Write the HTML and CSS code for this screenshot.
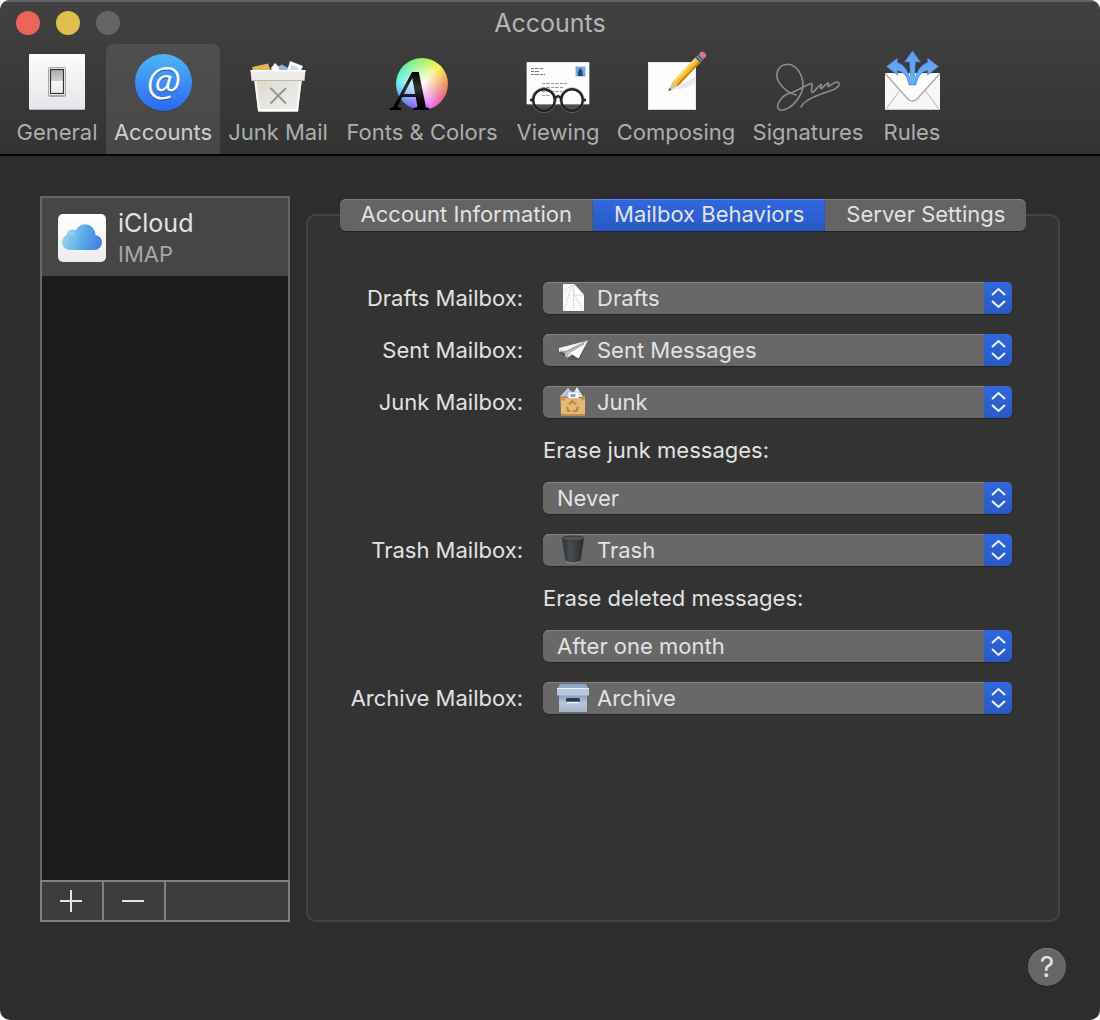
FILE: index.html
```html
<!DOCTYPE html>
<html lang="en">
<head>
    <meta charset="UTF-8">
    <meta name="viewport" content="width=device-width, initial-scale=1.0">
    <title>Accounts</title>
    <link rel="stylesheet" href="styles.css">
</head>
<body>
    <div class="window">
        <header class="titlebar">
            <div class="title-row">
                <div class="lights">
                    <button class="light close" aria-label="Close"></button>
                    <button class="light minimize" aria-label="Minimize"></button>
                    <button class="light zoom" aria-label="Zoom" disabled></button>
                </div>
                <h1>Accounts</h1>
            </div>
            <nav class="toolbar">
                <button class="tool">
                    <svg viewBox="0 0 72 64" aria-hidden="true">
                        <defs>
                            <linearGradient id="plate" x1="0" y1="0" x2="0" y2="1"><stop offset="0" stop-color="#fcfcfd"/><stop offset="1" stop-color="#e6e6ea"/></linearGradient>
                            <linearGradient id="rocker" x1="0" y1="0" x2="0" y2="1"><stop offset="0" stop-color="#aaa"/><stop offset=".48" stop-color="#d0d0d2"/><stop offset=".5" stop-color="#f6f6f6"/><stop offset="1" stop-color="#ececef"/></linearGradient>
                        </defs>
                        <rect x="8" y="4" width="56" height="56" rx="1" fill="#b5b5b9"/>
                        <rect x="8" y="4" width="56" height="55" rx="1" fill="url(#plate)"/>
                        <rect x="27" y="17" width="18" height="30" rx="2" fill="#aaa"/>
                        <rect x="28" y="18" width="16" height="27" rx="1" fill="#f4f4f4"/>
                        <rect x="29.500" y="19.500" width="13" height="24" fill="url(#rocker)" stroke="#333" stroke-width="1.200"/>
                    </svg>
                    <span>General</span>
                </button>
                <button class="tool active" aria-current="page">
                    <svg viewBox="0 0 72 64" aria-hidden="true">
                        <defs>
                            <linearGradient id="at" x1="0" y1="0" x2="0" y2="1"><stop offset="0" stop-color="#4fb5f5"/><stop offset="1" stop-color="#2b68f2"/></linearGradient>
                        </defs>
                        <circle cx="36.500" cy="33.300" r="28.500" fill="#222" opacity=".4"/>
                        <circle cx="36.500" cy="32.500" r="28.500" fill="url(#at)"/>
                        <text class="at-sign at-shadow" x="36.500" y="47">@</text>
                        <text class="at-sign" x="36.500" y="46">@</text>
                    </svg>
                    <span>Accounts</span>
                </button>
                <button class="tool">
                    <svg viewBox="0 0 72 64" aria-hidden="true">
                        <defs>
                            <linearGradient id="bin" x1="0" y1="0" x2="1" y2="1"><stop offset="0" stop-color="#dfd6bd"/><stop offset=".4" stop-color="#e3e3df"/><stop offset="1" stop-color="#f0f0f0"/></linearGradient>
                        </defs>
                        <path d="M10 17 L26 13.500 L29 21 L11 21Z" fill="#dcb55c"/>
                        <path d="M29 18 L33 13 L37 17 L38 21 L30 21Z" fill="#f7f7f7"/>
                        <path d="M37 16 L40 14.500 L46 18 L46 21 L37 21Z" fill="#8fb7dc"/>
                        <path d="M48 11 L61 16 L59 21 L45 21Z" fill="#f4f9fa"/>
                        <path d="M50 15 L56 18 L54 21 L48 21Z" fill="#c5dde2"/>
                        <path d="M12 28 H60 L56 61.500 H16Z" fill="url(#bin)"/>
                        <path d="M16 59 H56.500 L56 61.500 H16.500Z" fill="#fff"/>
                        <path d="M12 29 L16 60 L18 60 L14.500 29Z M60 29 L56 60 L54 60 L57.500 29Z" fill="#fff" opacity=".7"/>
                        <path d="M8.500 20 H63.500 L62.500 30.500 H9.500Z" fill="#ecebe7"/>
                        <path d="M8.500 20.800 H63.500" stroke="#fff" stroke-width="1.500"/>
                        <path d="M9.500 30.500 H62.500" stroke="#b9b9b4"/>
                        <path d="M28.500 38 L44 53.500 M44 38 L28.500 53.500" stroke="#98968a" stroke-width="2"/>
                    </svg>
                    <span>Junk Mail</span>
                </button>
                <button class="tool">
                    <svg viewBox="0 0 72 64" aria-hidden="true">
                        <defs>
                            <linearGradient id="ink" x1="0" y1="0" x2="0" y2="1"><stop offset=".2" stop-color="#000"/><stop offset=".45" stop-color="#333"/><stop offset=".7" stop-color="#000"/></linearGradient>
                        </defs>
                        <foreignObject x="10" y="8" width="52" height="52"><div class="color-wheel"></div></foreignObject>
                        <text class="font-letter" x="26" y="60">A</text>
                    </svg>
                    <span>Fonts &amp; Colors</span>
                </button>
                <button class="tool">
                    <svg viewBox="0 0 72 64" aria-hidden="true">
                        <rect x="4.500" y="12" width="63" height="42.500" rx="1" fill="#c8c8c8"/>
                        <rect x="5" y="12.500" width="62" height="41.500" rx=".5" fill="#fdfdfd"/>
                        <g fill="none" stroke="#777" stroke-width="1" stroke-dasharray="3 .8 4 1.200">
                            <path d="M9 18.500 H22 M9 21.500 H18 M9 24.500 H23"/>
                            <path d="M20 33.500 H45 M20 37.500 H42 M20 41.500 H40 M20 45.500 H29" stroke="#999"/>
                        </g>
                        <rect x="53.500" y="16.500" width="10" height="10" fill="#6fa9e8" stroke="#ccd7e4"/>
                        <path d="M56 26 V22 L58 18 L60 20 L61 26Z" fill="#26456f"/>
                        <g fill="none" stroke="#999" stroke-width="1" opacity=".5">
                            <circle cx="22" cy="50" r="12.500"/><circle cx="50" cy="50" r="12.500"/>
                        </g>
                        <g fill="#fff" fill-opacity=".12" stroke="#242424" stroke-width="2.400">
                            <circle cx="22" cy="50" r="10.800"/><circle cx="50" cy="50" r="10.800"/>
                            <path d="M32.800 48.500 Q36 44 39.200 48.500 M8 50 H12 M60 50 H64" fill="none"/>
                        </g>
                    </svg>
                    <span>Viewing</span>
                </button>
                <button class="tool">
                    <svg viewBox="0 0 72 64" aria-hidden="true">
                        <rect x="8" y="12" width="48" height="48" fill="#d5d5d5"/>
                        <rect x="8.500" y="12.500" width="47" height="46.500" fill="#fdfdfd"/>
                        <path d="M31 41 L55 27 L55 33 Q46 39 36 39Z" fill="#e8e8e8"/>
                        <g transform="translate(28.500 41) rotate(-46.500)">
                            <path d="M0 0 L10 -3.500 L10 3.500Z" fill="#e2c188"/>
                            <path d="M0 0 L3 -1.200 L3 1.200Z" fill="#333"/>
                            <rect x="10" y="-3.500" width="33" height="7" fill="#f2bd32"/>
                            <rect x="10" y="-3.500" width="33" height="2" fill="#fbdb72"/>
                            <rect x="10" y="1.500" width="33" height="2" fill="#c58a1c"/>
                            <rect x="42" y="-3.500" width="5.500" height="7" fill="#8fa5b3"/>
                            <path d="M43.500 -3.500 V3.500 M46 -3.500 V3.500" stroke="#26323a"/>
                            <rect x="47" y="-3.500" width="5.500" height="7" rx="2.500" fill="#d67493"/>
                        </g>
                    </svg>
                    <span>Composing</span>
                </button>
                <button class="tool">
                    <svg viewBox="0 0 72 64" aria-hidden="true">
                        <path d="M24 45 C14 43 3 31 5 23 C7 14 17 12 23 17 C31 24 34 37 27 47 C21 57 12 62 7 59.500 C3 56 9 46 17 43.500 C25 41 32 36 39 33.500 C42 33 38 42 40 42.500 C43 42 45 37 49 34.500 C51 34 47 39 49.500 38.500 C52 37 53 34 56 33 C58 33 54 37 57 36.500 C60 34 62 32 65 32 C69 33 67 37 62 39.500 C51 44 39 46 31 54 L29 57" fill="none" stroke="#8c8c8c" stroke-width="1.600" stroke-linecap="round"/>
                    </svg>
                    <span>Signatures</span>
                </button>
                <button class="tool">
                    <svg viewBox="0 0 72 64" aria-hidden="true">
                        <defs>
                            <linearGradient id="arrow" x1="0" y1="0" x2="0" y2="34" gradientUnits="userSpaceOnUse"><stop offset="0" stop-color="#6695ee"/><stop offset="1" stop-color="#62b5f7"/></linearGradient>
                        </defs>
                        <rect x="9" y="23" width="55" height="37" rx="1" fill="#f7f7f7"/>
                        <path d="M9 59.500 H64" stroke="#ccc"/>
                        <path d="M10 59 L23.500 41 M63 59 L49.500 41" stroke="#b5b5b5" fill="none"/>
                        <path d="M9.500 24 L31 48 Q36.500 54 42 48 L63.500 24" fill="#fff" stroke="#adadad" stroke-width="1.500"/>
                        <g fill="url(#arrow)" stroke="#3f74c4" stroke-width=".6">
                            <path d="M36.500 .8 L44.500 12 H39.500 Q39 24 37.500 35 H35.500 Q34 24 33.500 12 H28.500Z"/>
                            <path d="M10.500 16.500 L21.500 8 V12.500 Q33 16 34.800 35 H33 Q31 22 21.500 20.500 V25Z"/>
                            <path d="M62.500 16.500 L51.500 8 V12.500 Q40 16 38.200 35 H40 Q42 22 51.500 20.500 V25Z"/>
                        </g>
                    </svg>
                    <span>Rules</span>
                </button>
            </nav>
        </header>

        <main class="content">
            <aside class="sidebar">
                <ul class="accounts">
                    <li class="account">
                        <svg class="account-icon" viewBox="0 0 48 48" aria-hidden="true">
                            <defs>
                                <linearGradient id="cloud" x1="4" y1="24" x2="44" y2="34" gradientUnits="userSpaceOnUse"><stop offset="0" stop-color="#9bd3ee"/><stop offset=".5" stop-color="#5aa9ea"/><stop offset="1" stop-color="#4676df"/></linearGradient>
                                <linearGradient id="tile" x1="0" y1="0" x2="0" y2="1"><stop offset="0" stop-color="#fff"/><stop offset="1" stop-color="#ececec"/></linearGradient>
                            </defs>
                            <rect width="48" height="48" rx="5" fill="url(#tile)"/>
                            <g fill="url(#cloud)">
                                <circle cx="14.500" cy="21.500" r="6"/>
                                <circle cx="11.700" cy="28.300" r="7.700"/>
                                <circle cx="36.500" cy="28.500" r="7.500"/>
                                <circle cx="27" cy="20.800" r="10.500"/>
                                <rect x="11.700" y="22" width="24.800" height="14"/>
                            </g>
                            <path d="M11 21 Q16 20.500 18.500 24.500 Q16 20 17 16.500 Q12 14.500 9 19.500Z" fill="#9ddcf2" opacity=".5"/>
                        </svg>
                        <div>
                            <div class="account-name">iCloud</div>
                            <div class="account-type">IMAP</div>
                        </div>
                    </li>
                </ul>
                <div class="list-actions">
                    <button aria-label="Add account"><svg viewBox="0 0 22 22" aria-hidden="true"><path d="M0 11 H22 M11 0 V22"/></svg></button>
                    <button aria-label="Remove account"><svg viewBox="0 0 22 22" aria-hidden="true"><path d="M0 11 H22"/></svg></button>
                </div>
            </aside>

            <section class="panel">
                <div class="tabs" role="tablist">
                    <button class="tab" role="tab" aria-selected="false">Account Information</button>
                    <button class="tab selected" role="tab" aria-selected="true">Mailbox Behaviors</button>
                    <button class="tab" role="tab" aria-selected="false">Server Settings</button>
                </div>
                <form class="settings">
                    <label for="drafts">Drafts Mailbox:</label>
                    <div class="popup with-icon">
                        <select id="drafts"><option>Drafts</option></select>
                        <svg class="popup-icon" viewBox="0 0 32 32" aria-hidden="true">
                            <path d="M6 29.500 V2 H17 L27 13 V29.500Z" fill="#444" opacity=".4"/>
                            <path d="M6 29 V2 H17 L27 13 V29Z" fill="#fafafa"/>
                            <path d="M7 28 L15 3 M16.500 3 V28 M26 28 L18 14 M7 9 L15 3" stroke="#aab4de" stroke-dasharray="1 1.500" fill="none"/>
                            <path d="M17 2 L27 13 H17Z" fill="#fff" stroke="#c9c9c9" stroke-width=".7"/>
                        </svg>
                        <svg class="arrows" viewBox="0 0 28 32" aria-hidden="true"><path d="M8 13 L14.500 7 L21 13 M8 19 L14.500 25 L21 19"/></svg>
                    </div>

                    <label for="sent">Sent Mailbox:</label>
                    <div class="popup with-icon">
                        <select id="sent"><option>Sent Messages</option></select>
                        <svg class="popup-icon" viewBox="0 0 32 32" aria-hidden="true">
                            <path d="M2 19 L9 23 L12 26 L22 26 L31 8Z" fill="#333" opacity=".35"/>
                            <path d="M2 14 L31 6.500 L10 19 L2 17.500Z" fill="#f4f4f4"/>
                            <path d="M8 18 L31 6.500 L12 19 L10 24 L8 22Z" fill="#b9b9b9"/>
                            <path d="M12 18.500 L31 6.500 L21.500 24.500Z" fill="#fff"/>
                            <path d="M10 24 L12 18.500 L15.500 20.500Z" fill="#dedede"/>
                            <path d="M3 17 L9 17.500 L28 8 M12.500 18.500 L27 10" stroke="#777" stroke-width=".7" fill="none"/>
                        </svg>
                        <svg class="arrows" viewBox="0 0 28 32" aria-hidden="true"><path d="M8 13 L14.500 7 L21 13 M8 19 L14.500 25 L21 19"/></svg>
                    </div>

                    <label for="junk">Junk Mailbox:</label>
                    <div class="popup with-icon">
                        <select id="junk"><option>Junk</option></select>
                        <svg class="popup-icon" viewBox="0 0 32 32" aria-hidden="true">
                            <path d="M4 10 L11 2 L16 8 L20 1 L26 11Z" fill="#f2f4f8"/>
                            <path d="M5 10 L11 3 L15 8 L12 12Z" fill="#a9c0e6"/>
                            <path d="M11 6 H22 V13 H11Z" fill="#fff" stroke="#a7afc0" stroke-width=".7"/>
                            <rect x="13.500" y="8" width="5" height="3" fill="#8ba3dc"/>
                            <path d="M3.500 9 L8 12 H25 L28 9 V29.500 H4Z" fill="#e6b873"/>
                            <path d="M3.500 9 L8 12.500 V15 L4 13Z M28 9 L24.500 12.500 V15 L28 13Z" fill="#c8924b"/>
                            <path d="M4 28 H28 V29.500 H4Z" fill="#c48b40"/>
                            <path d="M12 18.500 L15.500 15 L19 18.500 M21 20.500 L19.500 25 H16 M13.500 25 H11 L10 21" fill="none" stroke="#b08a52" stroke-width="2.200" stroke-linejoin="round"/>
                        </svg>
                        <svg class="arrows" viewBox="0 0 28 32" aria-hidden="true"><path d="M8 13 L14.500 7 L21 13 M8 19 L14.500 25 L21 19"/></svg>
                    </div>

                    <label class="sub" for="erase-junk">Erase junk messages:</label>
                    <div class="popup">
                        <select id="erase-junk"><option>Never</option></select>
                        <svg class="arrows" viewBox="0 0 28 32" aria-hidden="true"><path d="M8 13 L14.500 7 L21 13 M8 19 L14.500 25 L21 19"/></svg>
                    </div>

                    <label for="trash">Trash Mailbox:</label>
                    <div class="popup with-icon">
                        <select id="trash"><option>Trash</option></select>
                        <svg class="popup-icon" viewBox="0 0 32 32" aria-hidden="true">
                            <defs>
                                <linearGradient id="can"><stop offset="0" stop-color="#2b2e30"/><stop offset=".35" stop-color="#4a4e51"/><stop offset=".7" stop-color="#383c3f"/><stop offset="1" stop-color="#25282a"/></linearGradient>
                            </defs>
                            <path d="M5 4 L8.500 28 Q16 32 23.500 28 L27 4Z" fill="url(#can)"/>
                            <path d="M8.500 27.500 Q16 31 23.500 27.500" stroke="#9a9fa2" fill="none"/>
                            <ellipse cx="16" cy="4.500" rx="11" ry="2.500" fill="#50555a" stroke="#2a2d2f" stroke-width=".8"/>
                        </svg>
                        <svg class="arrows" viewBox="0 0 28 32" aria-hidden="true"><path d="M8 13 L14.500 7 L21 13 M8 19 L14.500 25 L21 19"/></svg>
                    </div>

                    <label class="sub" for="erase-deleted">Erase deleted messages:</label>
                    <div class="popup">
                        <select id="erase-deleted"><option>After one month</option></select>
                        <svg class="arrows" viewBox="0 0 28 32" aria-hidden="true"><path d="M8 13 L14.500 7 L21 13 M8 19 L14.500 25 L21 19"/></svg>
                    </div>

                    <label for="archive">Archive Mailbox:</label>
                    <div class="popup with-icon">
                        <select id="archive"><option>Archive</option></select>
                        <svg class="popup-icon" viewBox="0 0 32 32" aria-hidden="true">
                            <defs>
                                <linearGradient id="box" x1="0" y1="0" x2="0" y2="1"><stop offset="0" stop-color="#8396b3"/><stop offset=".5" stop-color="#b9c6d8"/><stop offset="1" stop-color="#a3b2c9"/></linearGradient>
                            </defs>
                            <rect x="2" y="12" width="28" height="18" fill="url(#box)"/>
                            <path d="M3 2 H29 L31 6 H1Z" fill="#8fa7c9"/>
                            <rect x="0" y="6" width="32" height="7.500" rx=".5" fill="#b6c8e0"/>
                            <path d="M0 6.500 H32" stroke="#e8f0fa"/>
                            <rect x="9" y="16" width="14" height="4" rx="1.500" fill="#263b55"/>
                            <path d="M10 20.500 H22" stroke="#f3f7fb" stroke-width="1.500"/>
                        </svg>
                        <svg class="arrows" viewBox="0 0 28 32" aria-hidden="true"><path d="M8 13 L14.500 7 L21 13 M8 19 L14.500 25 L21 19"/></svg>
                    </div>
                </form>
            </section>
        </main>

        <footer class="footer">
            <button class="help" aria-label="Help">?</button>
        </footer>
    </div>
</body>
</html>
```
FILE: styles.css
```css
* { box-sizing: border-box; }
body { margin: 0; background: #fff; font-family: Inter, "Liberation Sans", sans-serif; font-size: 22px; color: #e2e2e2; }
button, select { font: inherit; color: inherit; border: 0; margin: 0; padding: 0; background: none; }
svg { display: block; overflow: visible; }

.window { min-height: 100vh; display: flex; flex-direction: column; background: #2d2d2d; border-radius: 10px; overflow: hidden; }

/* title bar and toolbar */
.titlebar { background: linear-gradient(#414141, #333); border-top: 2px solid #636363; border-bottom: 2px solid #060606; }
.title-row { display: grid; grid-template-columns: 1fr auto 1fr; align-items: center; height: 42px; padding: 0 16px; }
.lights { display: flex; gap: 16px; }
.light { width: 24px; height: 24px; border-radius: 50%; }
.close { background: #ed6559; }
.minimize { background: #e0c04c; }
.zoom { background: #656565; }
h1 { margin: 0; font-size: 25px; font-weight: 400; color: #b5b5b5; }
.toolbar { display: grid; grid-template-columns: 98px 114px 116px 172px 100px 136px 128px 80px; padding: 0 8px; }
.tool { display: flex; flex-direction: column; align-items: center; height: 110px; padding-top: 6px; color: #adadad; border-radius: 8px 8px 0 0; white-space: nowrap; }
.tool svg { width: 72px; height: 64px; }
.tool span { line-height: 36px; }
.tool.active { background: linear-gradient(#4f4f4f, #474747); color: #cecece; }
.at-sign { font: italic 40px "Open Sans", sans-serif; text-anchor: middle; fill: #f7f7f7; }
.at-shadow { fill: #1c4da8; }
.font-letter { font: italic bold 58px "Liberation Serif", serif; text-anchor: middle; fill: url(#ink); }
.color-wheel { width: 52px; height: 52px; border-radius: 50%; background: radial-gradient(#fff, rgba(255, 255, 255, 0) 70%), conic-gradient(#9df05e, #f6f04e 45deg, #e98a50 90deg, #ec5f8e 125deg, #e56df0 160deg, #7a5df0 205deg, #5fa5f5 240deg, #5ff0f0 275deg, #5ff0a0 315deg, #9df05e); }

/* accounts list */
.content { flex: 1; display: flex; gap: 16px; padding: 40px 40px 0; }
.sidebar { width: 250px; display: flex; flex-direction: column; }
.accounts { flex: 1; margin: 0; padding: 0; list-style: none; background: #1b1b1b; border: 2px solid #666; border-bottom: 0; }
.account { display: flex; align-items: center; gap: 12px; height: 78px; padding: 2px 16px 0; background: #464646; }
.account-icon { width: 48px; height: 48px; }
.account-name { font-size: 25px; line-height: 32px; }
.account-type { line-height: 30px; color: #a6a6a6; }
.list-actions { display: flex; height: 42px; background: #3c3c3c; border: 2px solid #808080; }
.list-actions button { width: 62px; padding: 0 20px 0 18px; border-right: 2px solid #808080; }
.list-actions svg { width: 22px; height: 22px; stroke: #e4e4e4; stroke-width: 2; }

/* settings panel */
.panel { flex: 1; margin-top: 18px; background: #333; border: 2px solid #444; border-radius: 10px; }
.tabs { display: flex; justify-content: center; margin-top: -17px; }
.tab { height: 32px; padding: 0 21px 2px; background: #646464; box-shadow: inset 0 1px #7c7c7c, 0 1px 1px #222; white-space: nowrap; }
.tab:first-child { border-radius: 6px 0 0 6px; }
.tab:last-child { border-radius: 0 6px 6px 0; }
.tab.selected { background: linear-gradient(#3068e0, #2959c4); box-shadow: inset 0 1px #5b8aec, 0 1px 1px #222; }
.settings { display: grid; grid-template-columns: 215px 1fr; gap: 20px; padding: 51px 46px 46px 0; align-items: center; }
.settings label { text-align: right; white-space: nowrap; }
.settings .sub { text-align: left; line-height: 24px; }
.sub, .popup { grid-column: 2; }
.popup { position: relative; }
.popup select { display: block; width: 100%; height: 32px; padding: 0 36px 0 14px; appearance: none; background: #686868; border-radius: 6px; box-shadow: inset 0 1px #868686, 0 1px 1px #222; }
.with-icon select { padding-left: 54px; }
.popup-icon { position: absolute; left: 14px; top: 0; width: 32px; height: 32px; pointer-events: none; }
.arrows { position: absolute; right: 0; top: 0; width: 28px; height: 32px; border-radius: 0 6px 6px 0; background: linear-gradient(#3068e0, #2959c4); fill: none; stroke: #f0f3fb; stroke-width: 2; pointer-events: none; }

.footer { display: flex; justify-content: flex-end; padding: 26px 34px 34px; }
.help { width: 38px; height: 38px; border-radius: 50%; background: #666; box-shadow: inset 0 1px #7c7c7c, 0 1px 1px #222; font-size: 28px; }
```
